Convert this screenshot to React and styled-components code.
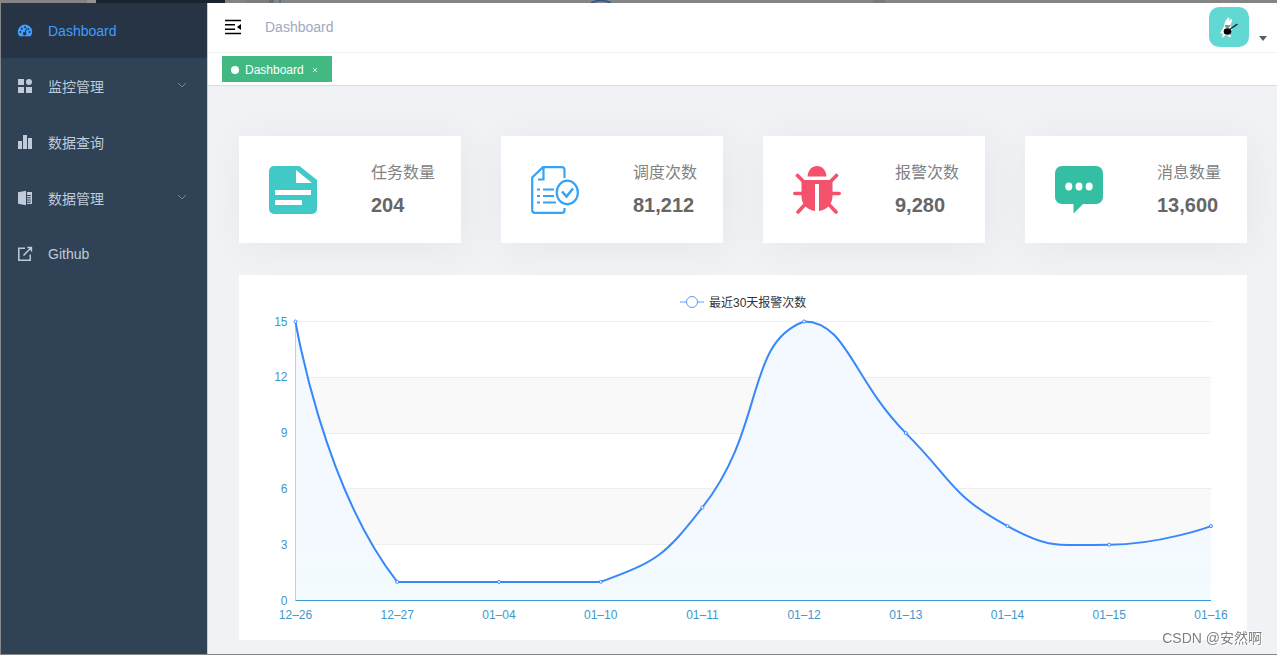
import React, { useEffect, useRef, useState } from 'react'
import styled, { createGlobalStyle } from 'styled-components'

const GlobalStyle = createGlobalStyle`
  * {
    box-sizing: border-box;
  }
  body {
    margin: 0;
    background: #f0f2f5;
    font-family: "Liberation Sans", "Noto Sans CJK SC", sans-serif;
  }
  a {
    color: inherit;
    text-decoration: none;
  }
  button {
    border: none;
    padding: 0;
    background: none;
    color: inherit;
    font: inherit;
    cursor: pointer;
  }
`

const Page = styled.div`
  min-height: 100vh;
  display: flex;
  flex-direction: column;
  border-left: 1px solid #868a8c;
  border-bottom: 1px solid #868686;
`
const Backdrop = styled.div`
  height: 3px;
  margin-left: -1px;
  display: flex;
  background: #848484;
  overflow: hidden;

  svg {
    display: block;
    flex: none;
  }
`
const Body = styled.div`
  flex: 1;
  display: flex;
`

const Sidebar = styled.nav`
  width: 207px;
  flex: none;
  background: #2f4256;
  border-right: 1px solid #c9cdd2;
`
const MenuItem = styled.a`
  height: ${({ $active }) => ($active ? 55 : 56)}px;
  padding: 0 20px 0 16px;
  display: flex;
  align-items: center;
  gap: 15px;
  font-size: 14px;
  color: ${({ $active }) => ($active ? '#409eff' : '#bfcbd9')};
  background: ${({ $active }) => ($active ? '#263445' : 'transparent')};

  svg {
    flex: none;
  }
`
const MenuText = styled.span`
  flex: 1;
`

const Main = styled.div`
  flex: 1;
  min-width: 0;
  display: flex;
  flex-direction: column;
`
const Navbar = styled.header`
  height: 49px;
  padding: 0 10px 2px 16px;
  display: flex;
  align-items: center;
  background: #fff;
`
const Hamburger = styled.button`
  width: 18px;
  height: 18px;
  display: flex;
`
const Breadcrumb = styled.span`
  flex: 1;
  margin-left: 23px;
  font-size: 14px;
  color: #9fa8be;
`
const UserMenu = styled.button`
  display: flex;
  align-items: flex-end;
  gap: 10px;
`
const Avatar = styled.span`
  width: 40px;
  height: 40px;
  border-radius: 10px;
  background: #62d8d3;
`
const Caret = styled.span`
  margin-bottom: 6px;
  border: 4px solid transparent;
  border-top: 5px solid #5a5e66;
  border-bottom: none;
`

const TagsBar = styled.div`
  height: 34px;
  padding: 3px 14px 0;
  background: #fff;
  border-top: 1px solid #f3f3f3;
  border-bottom: 1px solid #d8dce5;
`
const Tag = styled.div`
  width: max-content;
  height: 26px;
  padding: 2px 13px 0 9px;
  display: flex;
  align-items: center;
  background: #42b983;
  color: #fff;
  font-size: 12px;
`
const Dot = styled.span`
  width: 8px;
  height: 8px;
  margin-right: 6px;
  border-radius: 50%;
  background: #fff;
`
const CloseButton = styled.button`
  width: 8px;
  height: 8px;
  margin-left: 7px;
  display: flex;
`

const Content = styled.main`
  flex: 1;
  padding: 50px 30px 14px 31px;
  background: #f0f2f5;
`
const Cards = styled.div`
  display: grid;
  grid-template-columns: repeat(4, 1fr);
  gap: 40px;
  margin-bottom: 32px;
`
const Card = styled.section`
  height: 107px;
  padding: 0 26px 0 30px;
  display: flex;
  align-items: center;
  justify-content: space-between;
  background: #fff;
  box-shadow: 4px 4px 40px rgba(0, 0, 0, 0.05);
`
const CardText = styled.div`
  width: 64px;
  white-space: nowrap;
  color: #666;
  font-weight: 700;
`
const CardLabel = styled.div`
  margin-bottom: 12px;
  font-size: 16px;
  font-weight: 400;
  line-height: 18px;
  color: #828282;
`
const CardValue = styled.div`
  font-size: 20px;
  line-height: 22px;
`
const Panel = styled.section`
  height: 365px;
  overflow: hidden;
  background: #fff;

  svg {
    display: block;
    font-size: 12px;
  }
`
const Watermark = styled.div`
  position: fixed;
  right: 15px;
  bottom: 7px;
  font-size: 14px;
  line-height: 20px;
  color: #808080;
  text-shadow: 1px 1px 0 #fff, -1px -1px 0 #fff;
`

const menuIcons = {
  dashboard: (
    <path
      fillRule="evenodd"
      d="M2.2 13A7.2 7.2 0 1 1 13.800 13Q13.500 13.300 13 13.300H3Q2.500 13.300 2.200 13ZM3.400 8a1 1 0 1 0 0 2 1 1 0 0 0 0-2ZM4.800 4.700a1 1 0 1 0 0 2 1 1 0 0 0 0-2ZM8 3.200a1 1 0 1 0 0 2 1 1 0 0 0 0-2ZM12.600 8a1 1 0 1 0 0 2 1 1 0 0 0 0-2ZM11.300 5.300a.9.9 0 1 0 0 1.800.9.900 0 0 0 0-1.800ZM9.200 5.200 7.700 9A1.700 1.700 0 1 0 8.800 9.400L10 5.500Z"
    />
  ),
  component: <path d="M1 1h6v6H1zM1 9h6v6H1zM9 9h6v6H9zM12 1a3 3 0 1 1 0 6 3 3 0 0 1 0-6z" />,
  chart: <path d="M1 7h4v8H1zM6 1h4v14H6zM11 4h4v11h-4z" />,
  excel: (
    <path d="M9 .800v14.400L1 13.700V2.300zM10 2h5v12h-5v-1.300h3.800v-1H10v-1.200h3.800v-1H10V8.300h3.800v-1H10V6.100h3.800v-1H10z" />
  ),
  link: (
    <path
      fill="none"
      stroke="currentColor"
      strokeWidth="1.500"
      d="M8 2.300H1.800v11.900h11.400V8.500M6.500 9.500 14 1.800M10.300 1.600H14.400V5.500"
    />
  ),
}

const menu = [
  { title: 'Dashboard', icon: 'dashboard', active: true },
  { title: '监控管理', icon: 'component', children: true },
  { title: '数据查询', icon: 'chart' },
  { title: '数据管理', icon: 'excel', children: true },
  { title: 'Github', icon: 'link' },
]

const TaskIcon = () => (
  <svg width="48" height="48" viewBox="0 0 48 48">
    <path
      fill="#40c9c6"
      fillRule="evenodd"
      d="M5 0H30.500L48 14V43a5 5 0 0 1-5 5H5a5 5 0 0 1-5-5V5a5 5 0 0 1 5-5ZM27 4V17H43ZM6 24V29H42V24ZM6 34V39H33V34Z"
    />
  </svg>
)
const ScheduleIcon = () => (
  <svg width="48" height="48" viewBox="0 0 48 48" fill="none" stroke="#36a3f7" strokeWidth="2.200">
    <path d="M33.500 12V4Q33.500 1.200 31 1.200H12L1.200 11.500V44Q1.200 46.800 4 46.800H31Q33.500 46.800 33.500 44V42M12.500 1V13.500H7" />
    <path d="M6 23.500H9M12 23.500H23M6 30H9M12 30H23M6 36.500H9M12 36.500H25" />
    <ellipse cx="36.300" cy="26.500" rx="10.600" ry="11.800" />
    <path d="M31 25.500 35.500 30.500 42 22.500" strokeWidth="2.600" />
  </svg>
)
const BugIcon = () => (
  <svg width="48" height="48" viewBox="0 0 48 48" fill="#f4516c">
    <path d="M14.500 10.500C15 4 19 0 24 0S33 4 33.500 10.500Z" />
    <path d="M8.500 14H39.500V30C39.500 39 33 44 26 45V18H22V45C15 44 8.500 39 8.500 30Z" />
    <path
      d="M4.500 9.500 11 16M43.500 9.500 37 16M1.800 27.500H10M46.200 27.500H38M11.500 39 5 46M36.500 39 43 46"
      stroke="#f4516c"
      strokeWidth="3.600"
      strokeLinecap="round"
    />
  </svg>
)
const MessageIcon = () => (
  <svg width="48" height="48" viewBox="0 0 48 48">
    <path
      fill="#34bfa3"
      d="M7 0H41a7 7 0 0 1 7 7V31a7 7 0 0 1-7 7H28L18.500 47.500V38H7a7 7 0 0 1-7-7V7a7 7 0 0 1 7-7Z"
    />
    <g fill="#fff">
      <ellipse cx="13.800" cy="20.500" rx="3.500" ry="3.900" />
      <ellipse cx="24" cy="20.500" rx="3.500" ry="3.900" />
      <ellipse cx="34.200" cy="20.500" rx="3.500" ry="3.900" />
    </g>
  </svg>
)

const stats = [
  { label: '任务数量', value: '204', Icon: TaskIcon },
  { label: '调度次数', value: '81,212', Icon: ScheduleIcon },
  { label: '报警次数', value: '9,280', Icon: BugIcon },
  { label: '消息数量', value: '13,600', Icon: MessageIcon },
]

const alarms = [
  ['12–26', 15],
  ['12–27', 1],
  ['01–04', 1],
  ['01–10', 1],
  ['01–11', 5],
  ['01–12', 15],
  ['01–13', 9],
  ['01–14', 4],
  ['01–15', 3],
  ['01–16', 4],
]

// smooth curve whose control points stay inside the bounds of the data
function smoothPath(points, smooth = 0.5) {
  const ys = points.map((p) => p[1])
  const minY = Math.min(...ys)
  const maxY = Math.max(...ys)
  const clamp = (y) => Math.max(minY, Math.min(maxY, y))
  let d = `M${points[0]}`
  let cp0 = points[0]
  for (let i = 1; i < points.length; i++) {
    const [x, y] = points[i]
    const prev = points[i - 1]
    const next = points[i + 1]
    if (!next) {
      d += `C${cp0} ${x},${y} ${x},${y}`
      break
    }
    const vx = next[0] - prev[0]
    const vy = next[1] - prev[1]
    const lenPrev = Math.hypot(x - prev[0], y - prev[1])
    const lenNext = Math.hypot(next[0] - x, next[1] - y)
    const ratio = lenNext / (lenNext + lenPrev)
    const back = smooth * (1 - ratio)
    const cp1 = [x - vx * back, clamp(y - vy * back)]
    d += `C${cp0} ${cp1} ${x},${y}`
    cp0 = [x + vx * smooth * ratio, clamp(y + vy * smooth * ratio)]
  }
  return d
}

function AlarmChart() {
  const ref = useRef(null)
  const [width, setWidth] = useState(1008)

  useEffect(() => {
    const observer = new ResizeObserver(([entry]) => setWidth(entry.contentRect.width))
    observer.observe(ref.current)
    return () => observer.disconnect()
  }, [])

  const left = 56.5
  const right = width - 36
  const top = 46.5
  const bottom = 325.5
  const yOf = (v) => bottom - (v / 15) * (bottom - top)
  const points = alarms.map(([, v], i) => [
    left + (i * (right - left)) / (alarms.length - 1),
    yOf(v),
  ])
  const line = smoothPath(points)
  const mid = Math.round(width / 2)

  return (
    <Panel ref={ref}>
      <svg width={width} height="365" role="img" aria-label="最近30天报警次数">
        <defs>
          <linearGradient id="area" x1="0" y1="0" x2="0" y2="1">
            <stop offset="0" stopColor="#f3f9ff" />
            <stop offset="0.7" stopColor="#f4f8ff" />
            <stop offset="1" stopColor="#f3fbfd" />
          </linearGradient>
        </defs>
        <g stroke="#5b9cf8" fill="#fff">
          <path d={`M${mid - 63} 27H${mid - 39}`} />
          <circle cx={mid - 51} cy="27" r="5.500" />
        </g>
        <text x={mid - 34} y="32" fill="#333">
          最近30天报警次数
        </text>
        {[12, 6].map((v) => (
          <rect key={v} x={left} y={yOf(v)} width={right - left} height={yOf(0) - yOf(3)} fill="#f9f9f9" />
        ))}
        {[3, 6, 9, 12, 15].map((v) => (
          <path
            key={v}
            d={`M${left} ${Math.floor(yOf(v)) + 0.5}H${right}`}
            stroke="#eee"
          />
        ))}
        <path d={`${line}L${right},${bottom}L${left},${bottom}Z`} fill="url(#area)" />
        <path d={`M${left} ${top}V${bottom}`} stroke="#a9d6f0" />
        <path d={`M${left} ${bottom}H${right}`} stroke="#3a9bd2" />
        <path d={line} fill="none" stroke="#3888fa" strokeWidth="2" />
        {points.map(([x, y]) => (
          <circle key={x} cx={x} cy={y} r="1.500" fill="#fff" stroke="#3888fa" />
        ))}
        <g fill="#3f97cb">
          {[0, 3, 6, 9, 12, 15].map((v) => (
            <text key={v} x={left - 8} y={yOf(v) + 4} textAnchor="end">
              {v}
            </text>
          ))}
          {alarms.map(([date], i) => (
            <text key={date} x={points[i][0]} y="344" textAnchor="middle">
              {date}
            </text>
          ))}
        </g>
      </svg>
    </Panel>
  )
}

function App() {
  return (
    <>
      <GlobalStyle />
      <Page>
        <Backdrop>
          <svg width="900" height="3">
            <path d="M87 0h9v3h-9z" fill="#989490" />
            <path d="M96 0h129v3H96z" fill="#1a2330" />
            <path d="M245 0h28v3h-28z" fill="#7c7c7c" />
            <path d="M270 0v2h3V0M280 0v3" fill="none" stroke="#36618e" />
            <path d="M591 3Q601-2 611 3" fill="none" stroke="#2d5590" strokeWidth="1.500" />
            <path d="M873 0h12v3h-12z" fill="#7a7a7a" />
          </svg>
        </Backdrop>
        <Body>
          <Sidebar>
            {menu.map((item) => (
              <MenuItem key={item.title} href="#" $active={item.active}>
                <svg width="16" height="16" viewBox="0 0 16 16" fill="currentColor">
                  {menuIcons[item.icon]}
                </svg>
                <MenuText>{item.title}</MenuText>
                {item.children && (
                  <svg width="10" height="8" viewBox="0 0 10 8" fill="none" stroke="#76879a">
                    <path d="M1 1 5 5 9 1" />
                  </svg>
                )}
              </MenuItem>
            ))}
          </Sidebar>
          <Main>
            <Navbar>
              <Hamburger aria-label="Toggle sidebar">
                <svg width="18" height="18" viewBox="0 0 18 18">
                  <path d="M1 2.500H17M1 6.800H11M1 11.200H11M1 15.500H17" stroke="#000" strokeWidth="1.500" />
                  <path d="M17 6V12L13 9Z" />
                </svg>
              </Hamburger>
              <Breadcrumb>Dashboard</Breadcrumb>
              <UserMenu aria-label="User menu">
                <Avatar>
                  <svg width="40" height="40" viewBox="0 0 40 40">
                    <path
                      fill="#fff"
                      d="M15 19C16 14 18 11 20 10.500C21 11 20 13 19.500 15C21 12 23 11 23 13C23 16 21 17 21.500 19L23 22L21 27L22 30H20L18 28L15 29L14 31L13 29L14 27L11 26L13 23Z"
                    />
                    <ellipse cx="18.500" cy="24.500" rx="3.800" ry="3.300" />
                    <path d="M20 23 27.500 17.500M24.500 20 28.500 17M16 19H21" stroke="#222" strokeWidth="1.200" />
                    <path d="M17 20.500H20" stroke="#d66" />
                  </svg>
                </Avatar>
                <Caret />
              </UserMenu>
            </Navbar>
            <TagsBar>
              <Tag>
                <Dot />
                <a href="#">Dashboard</a>
                <CloseButton aria-label="Close tag">
                  <svg width="8" height="8" viewBox="0 0 8 8" stroke="#d5f0e3" strokeWidth="1">
                    <path d="M2 2 6 6M6 2 2 6" />
                  </svg>
                </CloseButton>
              </Tag>
            </TagsBar>
            <Content>
              <Cards>
                {stats.map(({ label, value, Icon }) => (
                  <Card key={label}>
                    <Icon />
                    <CardText>
                      <CardLabel>{label}</CardLabel>
                      <CardValue>{value}</CardValue>
                    </CardText>
                  </Card>
                ))}
              </Cards>
              <AlarmChart />
            </Content>
          </Main>
        </Body>
      </Page>
      <Watermark>CSDN @安然啊</Watermark>
    </>
  )
}

export default App
